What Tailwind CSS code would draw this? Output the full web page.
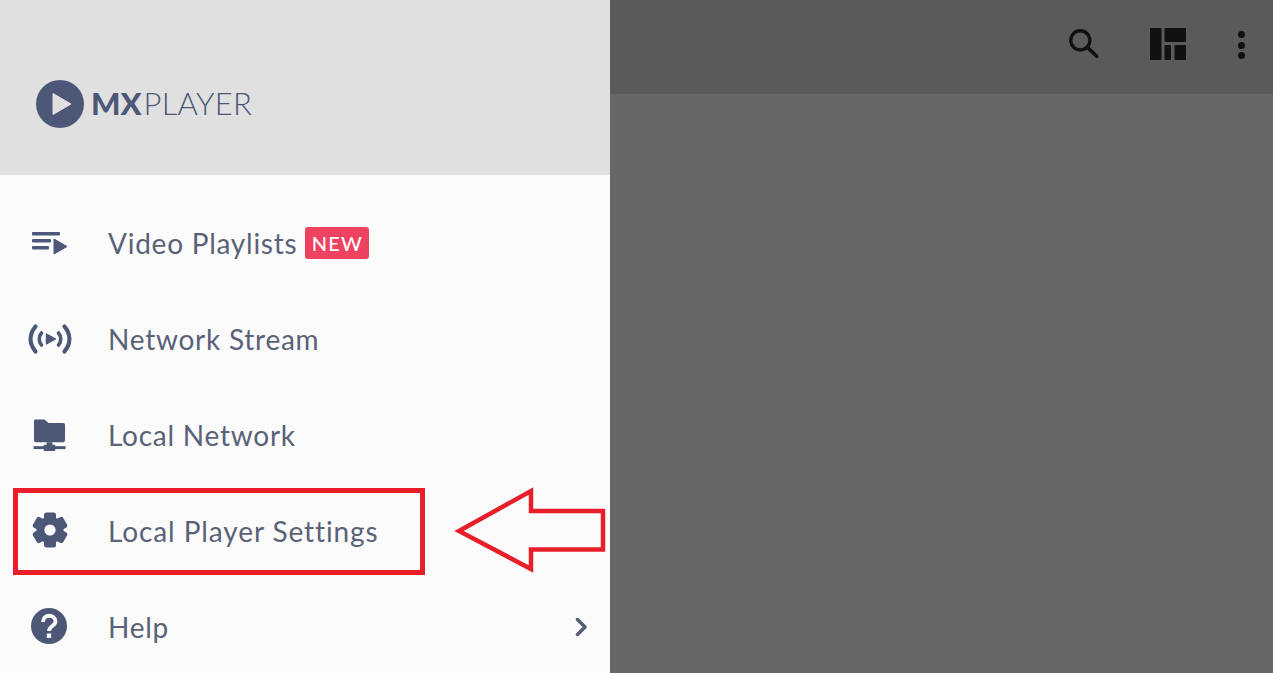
<!DOCTYPE html>
<html lang="en">
<head>
  <meta charset="UTF-8" />
  <meta name="viewport" content="width=device-width, initial-scale=1" />
  <title>MX Player menu</title>
  <script src="https://cdn.jsdelivr.net/npm/@tailwindcss/browser@4"></script>
</head>
<body class="bg-[#676767] font-['Lato','Open_Sans',sans-serif]">
<div class="relative flex h-[673px] w-[1273px] overflow-hidden">

  <!-- drawer -->
  <aside class="flex w-[610px] shrink-0 flex-col bg-[#fbfbfb]">
    <div class="flex h-[175px] shrink-0 items-center bg-[#e0e0e0] pl-[36px] pt-[33px]">
      <svg class="h-[48px] w-[48px]" viewBox="0 0 48 48">
        <circle cx="24" cy="24" r="24" fill="#4d5878"/>
        <path d="M17 13.5 L35 24 L17 34.5 Z" fill="#e0e0e0" stroke="#e0e0e0" stroke-width="1" stroke-linejoin="round"/>
      </svg>
      <span class="mb-[2px] ml-[7px] text-[31px] leading-none font-black text-[#4d5878]">MX</span>
      <span class="mb-[2px] ml-[2px] text-[31px] leading-none font-light tracking-[0.2px] text-[#4d5878]">PLAYER</span>
    </div>

    <nav class="flex flex-col pt-[20px] text-[28px] tracking-[0.75px] text-[#596277]">
      <a class="flex h-[96px] shrink-0 items-center">
        <span class="flex w-[108px] justify-center pr-[9px]">
          <svg class="h-[24px] w-[38px]" viewBox="0 0 38 24" fill="#4d5878">
            <rect x="1" y="1" width="28" height="3.6" rx="1"/>
            <rect x="1" y="8" width="19" height="3.6" rx="1"/>
            <rect x="1" y="15" width="17" height="3.6" rx="1"/>
            <path d="M23 8 L36 15.5 L23 23 Z" stroke="#4d5878" stroke-width="1" stroke-linejoin="round"/>
          </svg>
        </span>
        <span>Video Playlists</span>
        <span class="ml-[8px] flex h-[32px] w-[64px] items-center justify-center rounded-[3px] bg-[#ef4160] text-[20px] font-medium tracking-[1.3px] text-white">NEW</span>
      </a>

      <a class="flex h-[96px] shrink-0 items-center">
        <span class="flex w-[108px] justify-center pr-[9px]">
          <svg class="h-[32px] w-[44px]" viewBox="0 0 44 32" fill="none" stroke="#4d5878" stroke-linecap="round">
            <path d="M7.5 3.5 C1 11.5 1 20.5 7.5 28.5" stroke-width="4.2"/>
            <path d="M36.5 3.5 C43 11.5 43 20.5 36.5 28.5" stroke-width="4.2"/>
            <path d="M13.5 10 C10.5 13.5 10.5 18.5 13.5 22" stroke-width="3.6"/>
            <path d="M30.5 10 C33.5 13.5 33.5 18.5 30.5 22" stroke-width="3.6"/>
            <path d="M18.5 11 L27.5 16 L18.5 21 Z" fill="#4d5878" stroke-width="1.4" stroke-linejoin="round"/>
          </svg>
        </span>
        <span>Network Stream</span>
      </a>

      <a class="flex h-[96px] shrink-0 items-center">
        <span class="flex w-[108px] justify-center pr-[10px]">
          <svg class="h-[33px] w-[33px]" viewBox="0 0 34 34" fill="#4d5878">
            <path d="M2 0.5 H12 L16 4 H31 A2 2 0 0 1 33 6 V22 A2 2 0 0 1 31 24 H3 A2 2 0 0 1 1 22 V1.5 Z"/>
            <rect x="14" y="24" width="6" height="5"/>
            <rect x="0.5" y="28" width="33" height="3"/>
            <rect x="11" y="26.5" width="12" height="6.5" rx="1"/>
          </svg>
        </span>
        <span>Local Network</span>
      </a>

      <a class="flex h-[96px] shrink-0 items-center">
        <span class="flex w-[108px] justify-center pr-[9px]">
          <svg class="mb-[2px] h-[36px] w-[36px]" viewBox="0 0 36 36" fill="#4d5878">
            <circle cx="18" cy="18" r="13.5"/>
            <rect x="12" y="0.5" width="12" height="35" rx="2.5"/>
            <rect x="12" y="0.5" width="12" height="35" rx="2.5" transform="rotate(60 18 18)"/>
            <rect x="12" y="0.5" width="12" height="35" rx="2.5" transform="rotate(120 18 18)"/>
            <circle cx="18" cy="18" r="5.6" fill="#fbfbfb"/>
          </svg>
        </span>
        <span class="tracking-[0.9px]">Local Player Settings</span>
      </a>

      <a class="flex h-[96px] shrink-0 items-center">
        <span class="flex w-[108px] justify-center pr-[10px]">
          <svg class="mb-[2px] h-[36px] w-[36px]" viewBox="0 0 36 36">
            <circle cx="18" cy="18" r="18" fill="#4d5878"/>
            <path d="M12 14 C12 5.5 24.5 6 24.5 13.5 C24.5 18 18 18 18 23" fill="none" stroke="#fbfbfb" stroke-width="3.8"/>
            <rect x="15.8" y="25.5" width="4.4" height="4.4" fill="#fbfbfb"/>
          </svg>
        </span>
        <span>Help</span>
        <svg class="ml-auto mr-[23px] h-[20px] w-[12px]" viewBox="0 0 12 20" fill="none" stroke="#535c71" stroke-width="3.4" stroke-linecap="round" stroke-linejoin="round">
          <path d="M2.5 2.5 L10 10 L2.5 17.5"/>
        </svg>
      </a>
    </nav>
  </aside>

  <!-- dimmed content behind the drawer -->
  <main class="flex flex-1 flex-col">
    <header class="flex h-[94px] items-center bg-[#5a5a5a] pb-[4px]">
      <svg class="mb-[3px] ml-[458px] h-[31px] w-[31px]" viewBox="0 0 34 34" fill="none" stroke="#111" stroke-width="3.6">
        <circle cx="13.5" cy="13.5" r="10.5"/>
        <path d="M21 21 L31.5 31" stroke-linecap="round" stroke-width="4"/>
      </svg>
      <svg class="mb-[2px] ml-[51px] h-[32px] w-[36px]" viewBox="0 0 36 32" fill="#111">
        <rect x="0" y="0" width="11.5" height="32" rx="1"/>
        <rect x="14.5" y="0" width="21.5" height="14" rx="1"/>
        <rect x="14.5" y="17" width="6.5" height="15" rx="1"/>
        <rect x="24.5" y="17" width="11.5" height="15" rx="1"/>
      </svg>
      <div class="ml-[52px] flex flex-col gap-[3.5px]">
        <span class="h-[7px] w-[7px] rounded-full bg-[#111]"></span>
        <span class="h-[7px] w-[7px] rounded-full bg-[#111]"></span>
        <span class="h-[7px] w-[7px] rounded-full bg-[#111]"></span>
      </div>
    </header>
    <div class="flex-1 bg-[#676767]"></div>
  </main>

  <!-- annotation drawn over the screenshot -->
  <div class="absolute left-[13px] top-[488px] h-[87px] w-[412px] border-[5px] border-[#e81f2a]"></div>
  <svg class="absolute left-[450px] top-[484px] h-[92px] w-[160px]" viewBox="450 484 160 92" fill="none" stroke="#e81f2a" stroke-width="4.5" stroke-linejoin="miter">
    <path d="M459 531 L531 491 V511 H603 V549.5 H531 V569 Z"/>
  </svg>
</div>
</body>
</html>
